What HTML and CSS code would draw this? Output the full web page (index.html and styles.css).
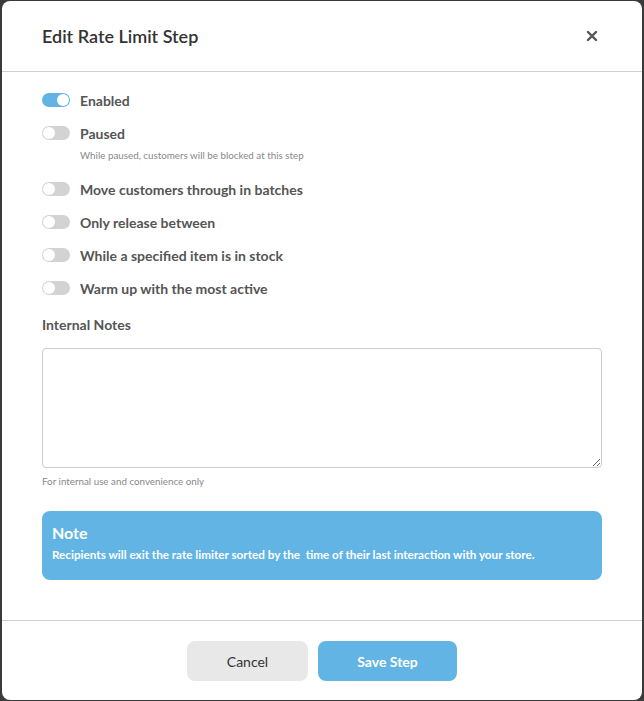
FILE: index.html
```html
<!DOCTYPE html>
<html lang="en">
<head>
  <meta charset="UTF-8" />
  <meta name="viewport" content="width=device-width, initial-scale=1.0"/>
  <title>Edit Rate Limit Step</title>
  <link rel="stylesheet" href="styles.css">
</head>
<body>
  <div class="modal">
    <div class="modal-header">
      <h2>Edit Rate Limit Step</h2>
      <button class="close" aria-label="Close">
        <svg width="12" height="12" viewBox="0 0 12 12">
          <path d="M2 2 L10 10 M10 2 L2 10" stroke="#555" stroke-width="2.4" stroke-linecap="round"/>
        </svg>
      </button>
    </div>

    <div class="modal-body">
      <div class="toggles">
        <div class="toggle-row">
          <span class="switch on"></span>
          <span class="label">Enabled</span>
        </div>
        <div class="toggle-block">
          <div class="toggle-row">
            <span class="switch"></span>
            <span class="label">Paused</span>
          </div>
          <div class="sub">While paused, customers will be blocked at this step</div>
        </div>
        <div class="toggle-row">
          <span class="switch"></span>
          <span class="label">Move customers through in batches</span>
        </div>
        <div class="toggle-row">
          <span class="switch"></span>
          <span class="label">Only release between</span>
        </div>
        <div class="toggle-row">
          <span class="switch"></span>
          <span class="label">While a specified item is in stock</span>
        </div>
        <div class="toggle-row">
          <span class="switch"></span>
          <span class="label">Warm up with the most active</span>
        </div>
      </div>

      <label class="field-label" for="notes">Internal Notes</label>
      <textarea id="notes"></textarea>
      <div class="help">For internal use and convenience only</div>

      <div class="note">
        <div class="note-title">Note</div>
        <div class="note-text">Recipients will exit the rate limiter sorted by the&nbsp; time of their last interaction with your store.</div>
      </div>
    </div>

    <div class="modal-footer">
      <button class="btn cancel">Cancel</button>
      <button class="btn save">Save Step</button>
    </div>
  </div>
</body>
</html>
```

FILE: styles.css
```css
body {
  margin: 0;
  background: #3a3a3a;
  font-family: Lato, "Open Sans", sans-serif;
}
.modal {
  margin: 1px 2px;
  width: 640px;
  height: 699px;
  background: #fff;
  border-radius: 8px;
  display: flex;
  flex-direction: column;
  overflow: hidden;
}
.modal-header {
  height: 70px;
  display: flex;
  align-items: center;
  justify-content: space-between;
  padding: 0 44px 0 40px;
  border-bottom: 1px solid #cfcfcf;
}
.modal-header h2 {
  margin: 0;
  font-size: 18px;
  font-weight: 600;
  color: #333;
}
.close {
  border: none;
  background: none;
  padding: 0;
  width: 12px;
  height: 12px;
  display: flex;
  cursor: pointer;
}
.modal-body {
  flex: 1;
  padding: 18px 40px 0;
  display: flex;
  flex-direction: column;
}
.toggles {
  display: flex;
  flex-direction: column;
  gap: 13px;
}
.toggle-row {
  display: flex;
  align-items: center;
  gap: 10px;
  height: 20px;
}
.switch {
  position: relative;
  width: 28px;
  height: 14px;
  border-radius: 7px;
  background: #d3d3d3;
  flex-shrink: 0;
}
.switch::after {
  content: "";
  position: absolute;
  top: 1px;
  left: 1px;
  width: 12px;
  height: 12px;
  border-radius: 50%;
  background: #fff;
}
.switch.on {
  background: #62b4e4;
}
.switch.on::after {
  left: 15px;
}
.label {
  font-size: 14px;
  font-weight: 700;
  color: #555;
}
.sub {
  margin: 6px 0 5px 38px;
  font-size: 9.8px;
  line-height: 12px;
  color: #888;
}
.field-label {
  margin-top: 17px;
  font-size: 14px;
  line-height: 20px;
  font-weight: 700;
  color: #555;
}
textarea {
  margin-top: 13px;
  height: 120px;
  box-sizing: border-box;
  border: 1px solid #ccc;
  border-radius: 4px;
  resize: vertical;
  font-family: inherit;
}
.help {
  margin-top: 7px;
  font-size: 9.8px;
  line-height: 12px;
  color: #888;
}
.note {
  margin-top: 24px;
  height: 69px;
  box-sizing: border-box;
  padding: 12px 10px;
  background: #62b4e4;
  border-radius: 8px;
  color: #fff;
}
.note-title {
  font-size: 16px;
  line-height: 20px;
  font-weight: 700;
}
.note-text {
  margin-top: 4px;
  font-size: 11.7px;
  line-height: 14px;
  font-weight: 700;
}
.modal-footer {
  border-top: 1px solid #cfcfcf;
  padding: 20px 0 19px;
  display: flex;
  justify-content: center;
  gap: 10px;
}
.btn {
  height: 40px;
  border: none;
  border-radius: 8px;
  font-family: inherit;
  font-size: 14px;
  cursor: pointer;
}
.cancel {
  width: 121px;
  background: #e8e8e8;
  color: #333;
}
.save {
  width: 139px;
  background: #62b4e4;
  color: #fff;
  font-weight: 700;
}
```
